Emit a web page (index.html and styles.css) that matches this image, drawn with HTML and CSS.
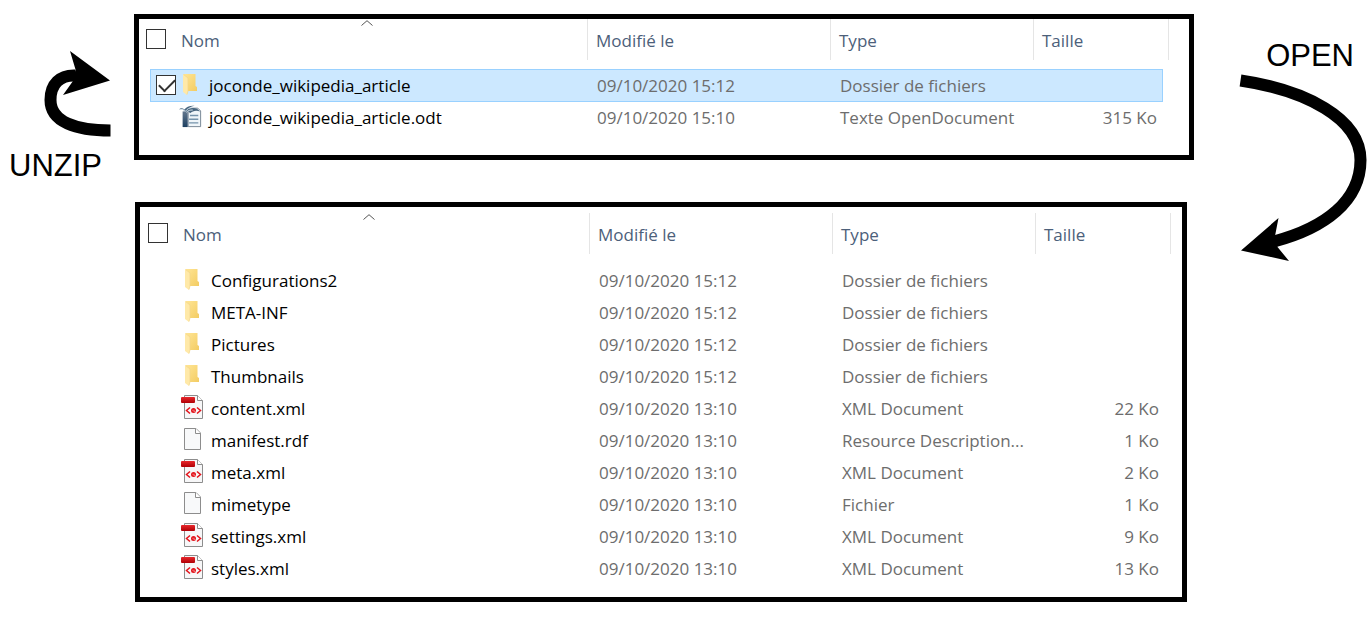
FILE: index.html
```html
<!DOCTYPE html>
<html lang="fr">
<head>
<meta charset="utf-8">
<title>joconde_wikipedia_article</title>
<link rel="stylesheet" href="styles.css">
</head>
<body>
<svg class="defs" aria-hidden="true">
  <defs>
    <linearGradient id="gold" x1="0" y1="0" x2="1" y2="1"><stop offset="0" stop-color="#ffe594"/><stop offset="1" stop-color="#f3cc63"/></linearGradient>
    <linearGradient id="red" x1="0" y1="0" x2="0" y2="1"><stop offset="0" stop-color="#e8282c"/><stop offset="1" stop-color="#b00006"/></linearGradient>
    <linearGradient id="navy" x1="0" y1="0" x2="0" y2="1"><stop offset="0" stop-color="#64788e"/><stop offset="1" stop-color="#1d3f61"/></linearGradient>
  </defs>
  <symbol id="folder" viewBox="0 0 24 24">
    <path d="M6 2h11.500v12l1.500 1v4H6z" fill="url(#gold)"/>
    <path d="M5 2l5 4v13l-1 4-4-3z" fill="#ffe9a8"/>
    <path d="M5.500 2.500L10 6v13l-1 3.500" fill="none" stroke="#f2d68b" stroke-width=".7"/>
  </symbol>
  <symbol id="xml" viewBox="0 0 24 24">
    <path d="M4.500 .5H17.500l5 5v18h-18z" fill="#f7f7f8" stroke="#8d8d8d"/>
    <path d="M17.500 .5v5h5" fill="#fff" stroke="#8d8d8d"/>
    <rect x="1" y="2" width="14" height="6" rx="1" fill="url(#red)"/>
    <path d="M10 12.500L6.500 15.500l3.500 3M17 12.500l3.500 3-3.500 3" fill="none" stroke="#e3131b" stroke-width="1.500"/>
    <circle cx="13.500" cy="15.500" r="2.500" fill="#e3131b"/><path d="M12.300 15.300h2.400M13.500 16.500h2" stroke="#f7b4b4" stroke-width=".6"/>
  </symbol>
  <symbol id="page" viewBox="0 0 24 24">
    <path d="M4.500 1.500H16l4.500 4.500v16.500h-16z" fill="#f8f9fa" stroke="#8d8d8d"/>
    <path d="M15.500 1.500v5h5" fill="#fff" stroke="#8d8d8d"/>
  </symbol>
  <symbol id="odt" viewBox="0 0 26 24">
    <path d="M11 3.500h10.500l3 3V23.500H11z" fill="#eff5f9" stroke="#71818f"/>
    <path d="M5 7h5.500v17H5z" fill="url(#navy)"/>
    <path d="M13 11.500h9M12 15.500h10M12 19.500h10" stroke="#7593ab" stroke-width="1.500"/>
    <path d="M1 5c2-2 4-1.500 6 0 2-3 6-4.500 11-4-3 .7-5 1.500-6 3 5-1.500 9-.5 12 3-4-1.500-8-1-11 2-1-2-3-2.500-5-1-1-2-3-4-7-3z" fill="#49667f"/>
    <path d="M3 5c2-.6 4 .5 5 2 2-3 5-4 8-4.500M9 8c2-2 4-2.500 7-2.500" fill="none" stroke="#d9e5ed"/>
  </symbol>
</svg>

<main class="diagram">
  <section class="step step-unzip">
    <svg class="arrow-unzip" viewBox="40 50 75 90" aria-hidden="true">
      <path d="M110.500 130.500C76 130.500 50.500 122 50.500 100C50.500 84 60 75 75 75.500" fill="none" stroke="#000" stroke-width="12"/>
      <path d="M110 80.500L70 51l5.500 18.500L73 81l-10 14z"/>
    </svg>
    <p class="caption">UNZIP</p>
  </section>

  <div class="windows">
    <div class="window window-archive">
      <table class="files">
        <thead><tr>
          <th><input type="checkbox" class="check" aria-label="Tout sélectionner"><span>Nom</span><svg class="sort" viewBox="0 0 12 6" aria-hidden="true"><path d="M.5 5.500L6 .7l5.500 4.800"/></svg></th>
          <th>Modifié le</th><th>Type</th><th>Taille</th>
        </tr></thead>
        <tbody>
          <tr class="selected"><td><input type="checkbox" class="check" id="f1" checked><svg class="icon"><use href="#folder"/></svg><label for="f1">joconde_wikipedia_article</label></td><td>09/10/2020 15:12</td><td>Dossier de fichiers</td><td></td></tr>
          <tr><td><svg class="icon"><use href="#odt"/></svg>joconde_wikipedia_article.odt</td><td>09/10/2020 15:10</td><td>Texte OpenDocument</td><td>315 Ko</td></tr>
        </tbody>
      </table>
    </div>

    <div class="window window-folder">
      <table class="files">
        <thead><tr>
          <th><input type="checkbox" class="check" aria-label="Tout sélectionner"><span>Nom</span><svg class="sort" viewBox="0 0 12 6" aria-hidden="true"><path d="M.5 5.500L6 .7l5.500 4.800"/></svg></th>
          <th>Modifié le</th><th>Type</th><th>Taille</th>
        </tr></thead>
        <tbody>
          <tr><td><svg class="icon"><use href="#folder"/></svg>Configurations2</td><td>09/10/2020 15:12</td><td>Dossier de fichiers</td><td></td></tr>
          <tr><td><svg class="icon"><use href="#folder"/></svg>META-INF</td><td>09/10/2020 15:12</td><td>Dossier de fichiers</td><td></td></tr>
          <tr><td><svg class="icon"><use href="#folder"/></svg>Pictures</td><td>09/10/2020 15:12</td><td>Dossier de fichiers</td><td></td></tr>
          <tr><td><svg class="icon"><use href="#folder"/></svg>Thumbnails</td><td>09/10/2020 15:12</td><td>Dossier de fichiers</td><td></td></tr>
          <tr><td><svg class="icon"><use href="#xml"/></svg>content.xml</td><td>09/10/2020 13:10</td><td>XML Document</td><td>22 Ko</td></tr>
          <tr><td><svg class="icon"><use href="#page"/></svg>manifest.rdf</td><td>09/10/2020 13:10</td><td>Resource Description...</td><td>1 Ko</td></tr>
          <tr><td><svg class="icon"><use href="#xml"/></svg>meta.xml</td><td>09/10/2020 13:10</td><td>XML Document</td><td>2 Ko</td></tr>
          <tr><td><svg class="icon"><use href="#page"/></svg>mimetype</td><td>09/10/2020 13:10</td><td>Fichier</td><td>1 Ko</td></tr>
          <tr><td><svg class="icon"><use href="#xml"/></svg>settings.xml</td><td>09/10/2020 13:10</td><td>XML Document</td><td>9 Ko</td></tr>
          <tr><td><svg class="icon"><use href="#xml"/></svg>styles.xml</td><td>09/10/2020 13:10</td><td>XML Document</td><td>13 Ko</td></tr>
        </tbody>
      </table>
    </div>
  </div>

  <section class="step step-open">
    <p class="caption">OPEN</p>
    <svg class="arrow-open" viewBox="1235 70 132 195" aria-hidden="true">
      <path d="M1240.500 80.500C1305 90 1360.500 118 1360.500 160C1360.500 201 1325 228 1274 241.500" fill="none" stroke="#000" stroke-width="12"/>
      <path d="M1241 250.500L1278.500 218l-3.500 18 2.500 11 11.500 14z"/>
    </svg>
  </section>
</main>
</body>
</html>
```

FILE: styles.css
```css
* { box-sizing: border-box; }

body {
  margin: 0;
  background: #fff;
  color: #000;
  font: 17px/24px "Open Sans", "Noto Sans", sans-serif;
}

.defs { position: absolute; width: 0; height: 0; }

.diagram {
  display: grid;
  grid-template-columns: 134px minmax(0, 1fr) 173px;
}

/* Captions and arrows on both sides */
.step { display: flex; flex-direction: column; }
.step-unzip { padding: 50px 0 0 9px; }
.step-open { padding-top: 38px; align-items: flex-end; }
.caption {
  margin: 0;
  font: 31px/36px "Liberation Sans", Arial, sans-serif;
}
.step-unzip .caption { margin-top: 8px; }
.step-open .caption { margin-right: 13px; }
.arrow-unzip { width: 75px; height: 90px; margin-left: 31px; }
.arrow-open { width: 132px; height: 195px; margin-top: -4px; }

/* File windows */
.windows {
  display: flex;
  flex-direction: column;
  gap: 42px;
  padding-top: 14px;
}
.window { border: 5px solid #000; }
.window-archive { padding: 0 20px 21px 0; }
.window-folder { margin: 0 7px 0 1px; padding: 6px 11px 12px 1px; }

.files, .files thead, .files tbody { display: block; }
.files tr {
  display: grid;
  grid-template-columns: minmax(0, 1fr) 243px 203px 129px;
  height: 32px;
  margin: 0 6px 0 11px;
}
.files thead tr {
  grid-template-columns: minmax(0, 1fr) 243px 203px 136px;
  height: 41px;
  margin: 0 0 10px 7px;
}
.window-folder thead tr { margin-bottom: 11px; }

.files th, .files td {
  display: flex;
  align-items: center;
  padding: 0 0 0 9px;
  color: #6d6d6d;
  font-weight: 400;
  white-space: nowrap;
}
.files th {
  position: relative;
  padding: 2px 0 0 8px;
  border-left: 1px solid #e5e5e5;
  color: #4c607a;
}
.files th:first-child { border: 0; padding: 0; gap: 15px; }
.files th:first-child span { padding-top: 2px; }
.files th:last-child { border-right: 1px solid #e5e5e5; }
.files td:first-child { padding-left: 28px; gap: 7px; color: #000; }
.files td:last-child { justify-content: flex-end; padding-right: 6px; }

.files .selected {
  height: 33px;
  margin-top: -1px;
  background: #cce8ff;
  box-shadow: inset 0 0 0 1px #99d1ff;
}
.files .selected td:first-child { padding-left: 6px; }
.selected .icon { margin-left: -5px; }

.icon { flex: none; width: 24px; height: 24px; margin-bottom: 4px; }
.sort {
  position: absolute;
  top: 1px;
  left: 50%;
  width: 12px;
  height: 6px;
  margin-left: -6px;
  fill: none;
  stroke: #555;
}

.check {
  appearance: none;
  position: relative;
  flex: none;
  width: 20px;
  height: 20px;
  margin: 0 0 2px;
  border: 1px solid #333;
  background: #fff;
}
.check:checked::after {
  content: "";
  position: absolute;
  top: 3px;
  left: 2px;
  width: 14px;
  height: 7px;
  border: solid #333;
  border-width: 0 0 2px 2px;
  transform: rotate(-45deg);
}
```
